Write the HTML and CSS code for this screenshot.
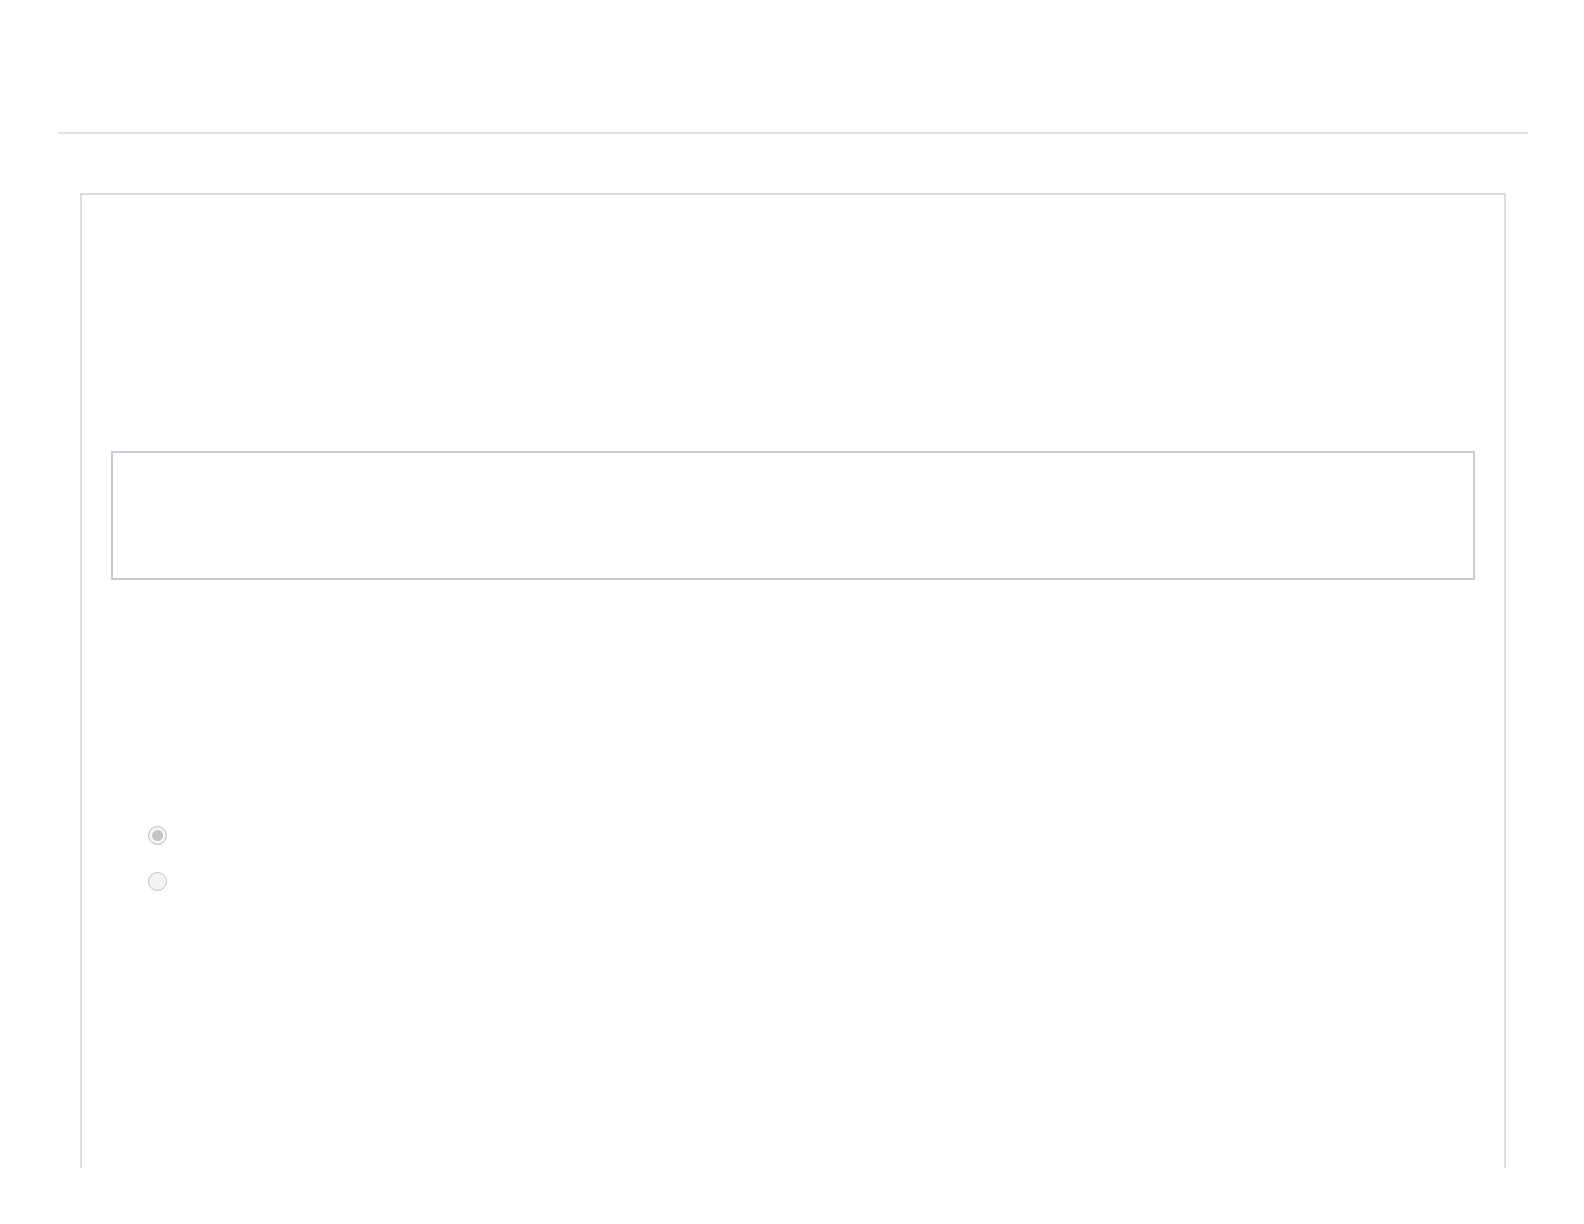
FILE: index.html
```html
<!DOCTYPE html>
<html lang="en">
<head>
    <meta charset="UTF-8">
    <meta name="viewport" content="width=device-width, initial-scale=1.0">
    <title>Form</title>
    <link rel="stylesheet" href="styles.css">
</head>
<body>
    <div class="header"></div>
    <div class="card">
        <div class="field-box"></div>
        <div class="options">
            <label class="option"><input type="radio" name="choice" checked disabled></label>
            <label class="option"><input type="radio" name="choice" disabled></label>
        </div>
    </div>
</body>
</html>
```

FILE: styles.css
```css
body {
    margin: 0;
    font-family: 'Liberation Sans', Arial, sans-serif;
    background: #ffffff;
    color: #333333;
}
.header {
    height: 132px;
    margin: 0 56px 0 58px;
    border-bottom: 2px solid #e3e1e3;
}
.card {
    box-sizing: border-box;
    height: 975px;
    margin: 59px 78px 0 80px;
    padding: 256px 29px 0 29px;
    border: 2px solid #dcdcdc;
    border-bottom: none;
}
.field-box {
    height: 129px;
    box-sizing: border-box;
    border: 2px solid #c6ccd6;
}
.options {
    margin-top: 246px;
    padding-left: 37px;
    display: flex;
    flex-direction: column;
    gap: 27px;
}
.option {
    display: flex;
    align-items: center;
    height: 19px;
}
.option input {
    appearance: none;
    -webkit-appearance: none;
    margin: 0;
    width: 19px;
    height: 19px;
    box-sizing: border-box;
    border: 1.5px solid #c2c2c2;
    border-radius: 50%;
    background: #f3f3f3;
}
.option input:checked {
    background: #c4c4c4;
    box-shadow: inset 0 0 0 3px #f7f7f7;
}
```
